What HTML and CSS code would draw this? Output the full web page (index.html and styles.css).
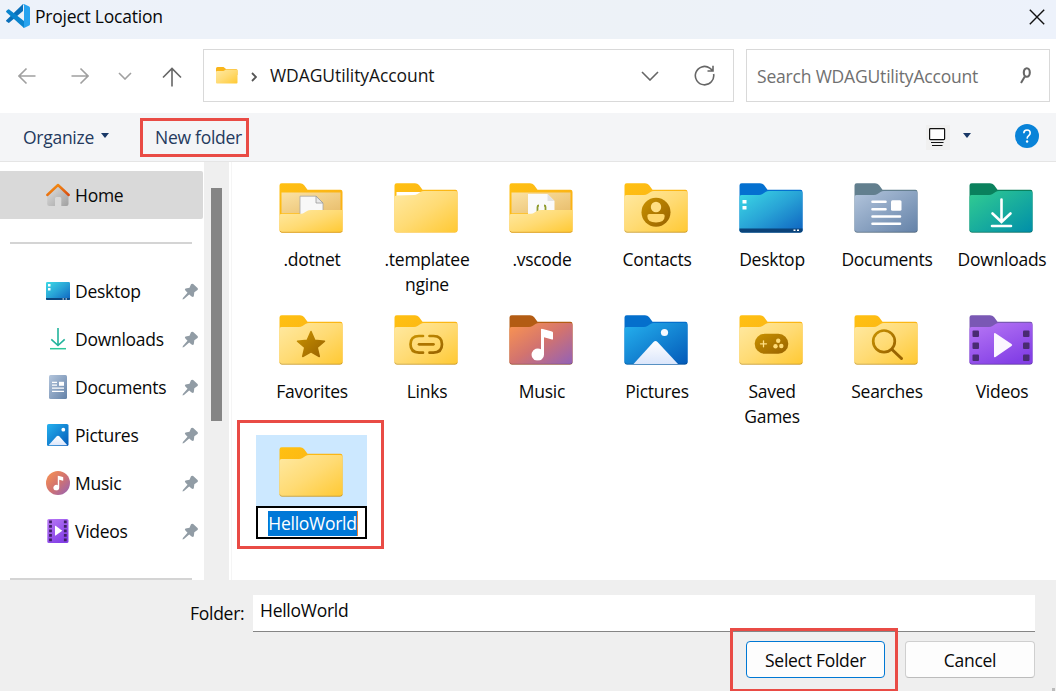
FILE: index.html
```html
<!DOCTYPE html>
<html lang="en">
<head>
<meta charset="utf-8">
<title>Project Location</title>
<link rel="stylesheet" href="styles.css">
</head>
<body>
<svg class="defs" width="0" height="0" aria-hidden="true">
  <defs>
    <linearGradient id="yellow" x1="0" y1="0" x2="1" y2="1"><stop offset="0" stop-color="#ffe9a2"/><stop offset=".5" stop-color="#ffdb74"/><stop offset="1" stop-color="#ffc933"/></linearGradient>
    <linearGradient id="cyan" x1="0" y1="0" x2="1" y2="1"><stop offset="0" stop-color="#3ddae6"/><stop offset=".5" stop-color="#28a3d6"/><stop offset="1" stop-color="#0e62c0"/></linearGradient>
    <linearGradient id="steel" x1="0" y1="0" x2="1" y2="1"><stop offset="0" stop-color="#b3c5dc"/><stop offset="1" stop-color="#6482a8"/></linearGradient>
    <linearGradient id="green" x1="0" y1="0" x2="1" y2="1"><stop offset="0" stop-color="#32cd91"/><stop offset="1" stop-color="#008ea9"/></linearGradient>
    <linearGradient id="sunset" x1="0" y1="0" x2="1" y2="1"><stop offset="0" stop-color="#fb9550"/><stop offset=".5" stop-color="#d2736f"/><stop offset="1" stop-color="#9261b8"/></linearGradient>
    <linearGradient id="blue" x1="0" y1="0" x2="1" y2="1"><stop offset="0" stop-color="#25b1ee"/><stop offset="1" stop-color="#0359b8"/></linearGradient>
    <linearGradient id="purple" x1="0" y1="0" x2=".6" y2="1"><stop offset="0" stop-color="#b878f5"/><stop offset="1" stop-color="#8440e6"/></linearGradient>
    <linearGradient id="gold" x1="0" y1="0" x2="1" y2="1"><stop offset="0" stop-color="#c99200"/><stop offset="1" stop-color="#986200"/></linearGradient>
    <linearGradient id="snow" x1="0" y1="0" x2="0" y2="1"><stop offset="0" stop-color="#fff"/><stop offset="1" stop-color="#dbe6fb"/></linearGradient>
    <linearGradient id="amber" x1="0" y1="0" x2="1" y2="1"><stop offset="0" stop-color="#ffc012"/><stop offset="1" stop-color="#f8ac18"/></linearGradient>
    <linearGradient id="roof" x1="0" y1="0" x2="1" y2="1"><stop offset="0" stop-color="#f99a14"/><stop offset="1" stop-color="#d94c10"/></linearGradient>
    <linearGradient id="wall" x1="0" y1="0" x2="1" y2="1"><stop offset="0" stop-color="#e2e2e2"/><stop offset="1" stop-color="#a0a0a0"/></linearGradient>
    <linearGradient id="glass" x1="0" y1="0" x2="1" y2="1"><stop offset="0" stop-color="#fbe2a4"/><stop offset="1" stop-color="#e8bd6b"/></linearGradient>
    <symbol id="back" viewBox="0 0 64 50"><path d="M.5 2.500Q.5.300 2.700.300H21Q23.500.300 25 2L28.500 6.800H61.500Q63.500 6.800 63.500 9V47Q63.500 49.500 61 49.500H3Q.5 49.500.5 47Z"/></symbol>
    <symbol id="front" viewBox="0 0 64 50"><path d="M.5 14Q.5 12 2.500 12H20Q22 12 23.500 11L26.500 9Q28 8 30 8H61.500Q63.500 8 63.500 10V47Q63.500 49.200 61 49.200H3Q.5 49.200.5 47Z"/><path d="M1 47.500Q1.500 49.200 3 49.200H61Q63 49.200 63.200 47.500" fill="none" stroke="#000" stroke-opacity=".2" stroke-width=".9"/></symbol>
    <symbol id="folder" viewBox="0 0 64 50"><use href="#back" fill="url(#amber)"/><use href="#front" fill="url(#yellow)"/></symbol>
    <symbol id="open" viewBox="0 0 64 50"><path fill="url(#yellow)" d="M.5 33Q.5 30.700 3 30.700H22Q24 30.700 25.500 29.500L28 28Q29.500 27 32 27H63.500V47Q63.500 49.200 61 49.200H3Q.5 49.200.5 47Z"/><path d="M1 48Q2 49.300 3 49.300H61Q63 49.300 63.300 48" fill="none" stroke="#dba22b" stroke-width=".9"/></symbol>
    <symbol id="pin" viewBox="0 0 17 17"><path fill="#919ca5" d="M9 1.200Q10 .2 11.200 1L15.500 5Q16.500 6 15.500 7L12.300 9.300L11.800 13.200Q11 14.600 9.600 13.500L7.200 11.400L2 16L.5 16.400L.9 14.900L5.500 9.700L3.200 7.300Q2.300 6.100 3.600 5.400L7.500 4.700Z"/></symbol>
    <symbol id="note" viewBox="0 0 22 32"><path fill="#fff" d="M10 .5Q10 0 11 .3L21 3Q22 3.300 22 4.200V10.500Q22 11.300 21 11L13 8.800V26A6.200 6.200 0 1 1 10 20.800Z"/></symbol>
  </defs>
</svg>

<div class="dialog">
  <header class="titlebar">
    <svg class="logo" width="24" height="24" viewBox="0 0 24 24"><path fill="#0a6fb9" d="M0 16.500L17 0V7L3.200 18.700Q2.600 19.100 2 18.600L.2 17.200Z"/><path fill="#0a84ce" d="M.2 7L2 5.400Q2.600 5 3.200 5.400L18 17V24L.1 8Z"/><path fill="#27a3ef" d="M17 .2Q17.800-.1 18.500.2L23.200 2.500Q24 3 24 4V20Q24 21 23.200 21.500L18.500 23.800Q17.800 24.200 17 23.600Q18 23 18 22V2Q18 .8 17 .2Z"/></svg>
    <span class="caption">Project Location</span>
    <svg class="close" width="16" height="16" viewBox="0 0 16 16"><path d="M.8.8L15.200 15.200M15.200.8L.8 15.200" stroke="#111" stroke-width="1.400"/></svg>
  </header>

  <nav class="navbar">
    <div class="history">
      <svg width="18" height="18" viewBox="0 0 18 18" class="line pale"><path d="M17.500 9H1M8.500 1.500L1 9L8.500 16.500"/></svg>
      <svg width="18" height="18" viewBox="0 0 18 18" class="line pale"><path d="M.5 9H17M9.500 1.500L17 9L9.500 16.500"/></svg>
      <svg width="14" height="8" viewBox="0 0 14 8" class="line pale"><path d="M1 1L7 7L13 1"/></svg>
      <svg width="20" height="20" viewBox="0 0 20 20" class="line dark"><path d="M10 19.500V1.500M1 10.500L10 1.500L19 10.500"/></svg>
    </div>
    <div class="address">
      <svg width="22" height="17" viewBox="0 0 22 17"><path fill="#f9b51b" d="M0 1.500Q0 0 1.500 0H7.500L10 2H20Q21.500 2 21.500 3.500V8H0Z"/><path fill="url(#yellow)" d="M0 5Q0 4 1 4H7.500L10 2.500H20.500Q21.500 2.500 21.500 3.500V15.500Q21.500 16.500 20.500 16.500H1Q0 16.500 0 15.500Z"/></svg>
      <svg class="line crumb" width="6" height="10" viewBox="0 0 6 10"><path d="M1 1L5 5L1 9"/></svg>
      <span class="path">WDAGUtilityAccount</span>
      <svg class="line dark" width="18" height="10" viewBox="0 0 18 10"><path d="M1 1L9 9L17 1"/></svg>
      <svg class="line dark reload" width="21" height="21" viewBox="0 0 21 21"><path d="M19.600 9A9.200 9.200 0 1 1 15.800 3.100L18.800 5.600M19 .8V6H13.500"/></svg>
    </div>
    <div class="search">
      <span>Search WDAGUtilityAccount</span>
      <svg width="11" height="17" viewBox="0 0 11 17"><ellipse cx="6.800" cy="5.500" rx="3" ry="4.300" fill="none" stroke="#666" stroke-width="2.100"/><path d="M4.800 9.500L1 16" stroke="#666" stroke-width="2"/></svg>
    </div>
  </nav>

  <div class="toolbar">
    <span class="organize">Organize</span>
    <i class="caret"></i>
    <span class="new-folder">New folder<i class="mark"></i></span>
    <span class="view"><svg width="18" height="19" viewBox="0 0 18 19"><rect x=".6" y=".6" width="15" height="11" rx=".8" fill="#fff" stroke="#111" stroke-width="1.200"/><path d="M2 14.500H14.500M3 17.500H13.500" stroke="#111" stroke-width="1"/></svg></span>
    <i class="caret view-caret"></i>
    <span class="help"><svg width="24" height="24" viewBox="0 0 24 24"><circle cx="12" cy="12" r="12" fill="#0983d8"/><path d="M8.800 9.300Q8.800 6 12 6T15.200 9Q15.200 10.500 13.700 11.700T12.100 14.600" fill="none" stroke="#fff" stroke-width="1.600"/><circle cx="12.100" cy="17.500" r="1.200" fill="#fff"/></svg></span>
  </div>

  <main class="content">
    <aside class="sidebar">
      <div class="place home"><svg width="24" height="24" viewBox="0 0 24 24"><path fill="url(#wall)" d="M1.200 11.500L12 2L22.500 11.500V21Q22.500 23 20.500 23H15.300V15.500Q15.300 14 14 14H10.500Q9 14 9 15.500V23H3.200Q1.200 23 1.200 21Z"/><path d="M1.300 12L12 2L22.700 12" fill="none" stroke="url(#roof)" stroke-width="2.400" stroke-linecap="round" stroke-linejoin="round"/></svg><span>Home</span></div>
      <hr class="rule">
      <div class="pinned">
        <div class="place"><svg width="24" height="24" viewBox="0 0 24 24"><rect y="3" width="24" height="18" rx="1.200" fill="url(#cyan)"/><path fill="#0c477f" d="M0 19H24V20Q24 21 23 21H1Q0 21 0 20Z"/><path fill="#fff" d="M2 5H4.500V7.500H2ZM2 9H4.500V11.500H2ZM16.500 19.500H18V20.500H16.500ZM19.500 19.500H21V20.500H19.500Z"/></svg><span>Desktop</span><svg class="pin" width="17" height="17"><use href="#pin"/></svg></div>
        <div class="place"><svg width="24" height="24" viewBox="0 0 24 24"><path d="M12 1V18M5.300 12.300L12 18.500L18.700 12.300" fill="none" stroke="#22b39b" stroke-width="1.600"/><path d="M4 21.700H20" stroke="#2cc89a" stroke-width="1.500"/></svg><span>Downloads</span><svg class="pin" width="17" height="17"><use href="#pin"/></svg></div>
        <div class="place"><svg width="24" height="24" viewBox="0 0 24 24"><rect x="3" width="18" height="24" rx="1.500" fill="url(#steel)"/><path d="M6 7.300H11M6 10.200H11M6 13.200H18M6 16.400H18" stroke="#fff" stroke-width="1.200"/><rect x="13" y="6.800" width="5" height="4" fill="#fff"/></svg><span>Documents</span><svg class="pin" width="17" height="17"><use href="#pin"/></svg></div>
        <div class="place"><svg width="24" height="24" viewBox="0 0 24 24"><rect x="1" y="1" width="21.500" height="22" rx="1.600" fill="url(#blue)"/><path fill="url(#snow)" d="M2.500 22.300L10.500 13.500Q12 12 13.500 13.500L21.300 22.300Z"/><circle cx="17.300" cy="6.700" r="1.900" fill="#fff"/></svg><span>Pictures</span><svg class="pin" width="17" height="17"><use href="#pin"/></svg></div>
        <div class="place"><svg width="24" height="24" viewBox="0 0 24 24"><circle cx="12" cy="12" r="12" fill="url(#sunset)"/><use href="#note" x="7" y="4.500" width="10.500" height="15"/></svg><span>Music</span><svg class="pin" width="17" height="17"><use href="#pin"/></svg></div>
        <div class="place"><svg width="24" height="24" viewBox="0 0 24 24"><rect x="1.300" width="21.200" height="24" rx="1.600" fill="url(#purple)"/><path d="M4.500 1.500V24M19.300 1.500V24" stroke="#402064" stroke-width="2.800" stroke-dasharray="2.800 1.700"/><path fill="#fff" d="M9 7Q9 6.500 9.600 6.800L16.300 11.700L9.600 16.500Q9 16.900 9 16.200Z"/></svg><span>Videos</span><svg class="pin" width="17" height="17"><use href="#pin"/></svg></div>
      </div>
      <hr class="rule">
    </aside>
    <div class="track"><div class="thumb"></div></div>

    <section class="files">
      <div class="file"><svg width="64" height="50" viewBox="0 0 64 50"><use href="#back" fill="url(#amber)"/><path fill="url(#glass)" d="M2.500 9.500H61.500V30H2.500Z"/><path fill="#f8f8f8" stroke="#a6a6a6" stroke-width=".8" d="M21 32V13.200H37L44 20V31Z"/><path fill="#e9e9e9" stroke="#999" stroke-width=".8" d="M37 13.200V20H44Z"/><use href="#open"/></svg><span>.dotnet</span></div>
      <div class="file"><svg width="64" height="50" viewBox="0 0 64 50"><use href="#back" fill="url(#amber)"/><path fill="#fff" d="M2.500 9H30V13H2.500Z"/><path fill="url(#yellow)" d="M.5 14Q.5 12.800 2.500 12.600L20 12Q22 12 23.500 11L26.500 9Q28 8 30 8H61.500Q63.500 8 63.500 10V47Q63.500 49.200 61 49.200H3Q.5 49.200.5 47Z"/></svg><span>.templatee<br>ngine</span></div>
      <div class="file"><svg width="64" height="50" viewBox="0 0 64 50"><use href="#back" fill="url(#amber)"/><path fill="url(#glass)" d="M2.500 9.500H61.500V30H2.500Z"/><path fill="#fafafa" d="M19 32V11H38.500L45.500 18V31Z"/><path fill="#e3e3e3" d="M38.500 11V18H45.500Z"/><path d="M30 22.500Q28.500 22.500 28.500 24V29M35 22.500Q36.500 22.500 36.500 24V29" fill="none" stroke="#8f9b2d" stroke-width="1.800"/><use href="#open"/></svg><span>.vscode</span></div>
      <div class="file"><svg width="64" height="50" viewBox="0 0 64 50"><use href="#folder"/><circle cx="32" cy="29.200" r="14.500" fill="url(#gold)"/><circle cx="32" cy="24" r="5.200" fill="#ffde82"/><path fill="#ffd76d" d="M23.300 33Q23.300 31 25.300 31H38.700Q40.700 31 40.700 33Q40.700 39.500 32 39.500T23.300 33Z"/></svg><span>Contacts</span></div>
      <div class="file"><svg width="64" height="50" viewBox="0 0 64 50"><use href="#back" fill="#0470d0"/><use href="#front" fill="url(#cyan)"/><path fill="#0b4379" d="M.5 45.500H63.500V47Q63.500 49.500 61 49.500H3Q.5 49.500.5 47Z"/><path fill="#fff" d="M3.500 17H7.500V20.500H3.500ZM3.500 23H7.500V26.500H3.500ZM54.500 46.500H56.500V48H54.500ZM58 46.500H60V48H58Z"/></svg><span>Desktop</span></div>
      <div class="file"><svg width="64" height="50" viewBox="0 0 64 50"><use href="#back" fill="#627f8e"/><use href="#front" fill="url(#steel)"/><path d="M18.500 18.700H31.500M18.500 26.200H31.500M18.500 33.500H46M18.500 40.800H46" stroke="#fff" stroke-width="2.600" stroke-linecap="round"/><rect x="37" y="17.300" width="10.500" height="10.500" rx="1.500" fill="#fff"/></svg><span>Documents</span></div>
      <div class="file"><svg width="64" height="50" viewBox="0 0 64 50"><use href="#back" fill="#0a815d"/><use href="#front" fill="url(#green)"/><path d="M32.500 16.500V38.500M23.500 30.500L32.500 39L41.500 30.500M23 43H42" fill="none" stroke="#fff" stroke-width="2.600" stroke-linecap="round"/></svg><span>Downloads</span></div>

      <div class="file"><svg width="64" height="50" viewBox="0 0 64 50"><use href="#folder"/><path fill="url(#gold)" stroke="url(#gold)" stroke-width="1.500" stroke-linejoin="round" d="M32 16.500L35.800 25.300L45.500 26.200L38.200 32.500L40.300 41.500L32 36.800L23.700 41.500L25.800 32.500L18.500 26.200L28.200 25.300Z"/></svg><span>Favorites</span></div>
      <div class="file"><svg width="64" height="50" viewBox="0 0 64 50"><use href="#folder"/><path d="M29 21H25Q16.500 21 16.500 29.300T25 37.700H29M35.500 21H39.500Q48 21 48 29.300T39.500 37.700H35.500" fill="none" stroke="url(#gold)" stroke-width="2.700" stroke-linecap="round"/><path d="M25 29.300H39.500" stroke="#ad7500" stroke-width="2.700" stroke-linecap="round"/></svg><span>Links</span></div>
      <div class="file"><svg width="64" height="50" viewBox="0 0 64 50"><use href="#back" fill="#b35c13"/><use href="#front" fill="url(#sunset)"/><use href="#note" x="22" y="13.500" width="22" height="32"/></svg><span>Music</span></div>
      <div class="file"><svg width="64" height="50" viewBox="0 0 64 50"><use href="#back" fill="#046fcc"/><use href="#front" fill="url(#blue)"/><path fill="url(#snow)" d="M9.500 49L29.500 27Q31.500 25 33.500 27L54 49Z"/><circle cx="40.500" cy="17.500" r="3.600" fill="#f7faff"/></svg><span>Pictures</span></div>
      <div class="file"><svg width="64" height="50" viewBox="0 0 64 50"><use href="#folder"/><rect x="15.700" y="18.800" width="33.600" height="20" rx="10" fill="url(#gold)"/><path d="M21.500 28.800H27.500M24.500 25.800V31.800" stroke="#ffdf83" stroke-width="1.300" stroke-linecap="round"/><g fill="#ffdb75"><circle cx="36.500" cy="31.200" r="2.200"/><circle cx="39.200" cy="25.800" r="2.200"/><circle cx="42.300" cy="31" r="2.200"/></g></svg><span>Saved<br>Games</span></div>
      <div class="file"><svg width="64" height="50" viewBox="0 0 64 50"><use href="#folder"/><circle cx="30" cy="26.300" r="10.800" fill="none" stroke="url(#gold)" stroke-width="2.700"/><path d="M38 34.500L47.500 43.500" stroke="#996300" stroke-width="3" stroke-linecap="round"/></svg><span>Searches</span></div>
      <div class="file"><svg width="64" height="50" viewBox="0 0 64 50"><use href="#back" fill="#7a58b4"/><use href="#front" fill="url(#purple)"/><g fill="#492b72"><rect x="3.500" y="15.500" width="6.500" height="6.500" rx="1"/><rect x="3.500" y="27.500" width="6.500" height="6.500" rx="1"/><rect x="3.500" y="39.500" width="6.500" height="6.500" rx="1"/><rect x="54" y="15.500" width="6.500" height="6.500" rx="1"/><rect x="54" y="27.500" width="6.500" height="6.500" rx="1"/><rect x="54" y="39.500" width="6.500" height="6.500" rx="1"/></g><path fill="#fbf6ff" d="M25 19Q25 17.500 26.500 18.300L42.500 29Q44 30 42.500 31L26.500 42Q25 42.800 25 41.500Z"/></svg><span>Videos</span></div>

      <div class="file selected"><svg width="64" height="50"><use href="#folder"/></svg><div class="rename"><span>HelloWorld</span></div><i class="mark"></i></div>
    </section>
  </main>

  <footer class="footer">
    <div class="field"><label>Folder:</label><div class="input">HelloWorld</div></div>
    <div class="actions">
      <div class="button primary"><span>Select Folder</span><i class="mark"></i></div>
      <div class="button"><span>Cancel</span></div>
    </div>
    <i class="grip"></i>
  </footer>
</div>
</body>
</html>
```

FILE: styles.css
```css
* { box-sizing: border-box; }

body {
  margin: 0;
  overflow: hidden;
  background: #fff;
  color: #080808;
  font-family: "Open Sans", "Noto Sans", sans-serif;
  font-size: 17.5px;
  letter-spacing: -0.27px;
  line-height: 25px;
}

svg { display: block; flex: none; }
.defs { position: absolute; }
.dialog { width: 1056px; height: 691px; display: flex; flex-direction: column; }

.titlebar {
  height: 39px;
  display: flex;
  align-items: center;
  padding: 0 11px 7px 6px;
  background: linear-gradient(90deg, #edf2fa, #edf2f7 60%, #edf2fb);
}
.caption { margin: 1px 0 0 5px; letter-spacing: -0.22px; }
.close { margin: 1px 0 0 auto; }

.navbar {
  height: 74px;
  display: flex;
  align-items: center;
  padding: 0 6px 1px 18px;
}
.history { width: 185px; display: flex; align-items: center; }
.history svg:nth-child(2) { margin-left: 35px; }
.history svg:nth-child(3) { margin-left: 29px; }
.history svg:nth-child(4) { margin: 2px 0 0 30px; }
.line { fill: none; stroke-width: 1.6; }
.pale { stroke: #a0a0a0; }
.dark { stroke: #666; }
.address, .search {
  height: 53px;
  display: flex;
  align-items: center;
  border: 1px solid #d9d9d9;
}
.address { width: 531px; padding: 0 18px 0 12px; }
.crumb { margin: 2px 13px 0 13px; stroke: #555; stroke-width: 1.8; }
.path { margin-right: auto; color: #151515; letter-spacing: -0.08px; }
.reload { margin-left: 35px; }
.search {
  width: 304px;
  margin-left: 12px;
  padding: 0 18px 0 10px;
  justify-content: space-between;
  color: #707070;
  letter-spacing: -0.19px;
}
.search span { margin-top: 2px; }

.toolbar {
  height: 49px;
  display: flex;
  align-items: center;
  padding: 0 17px 0 23px;
  background: #f4f5f7;
  border-bottom: 1px solid #e5e5e5;
  color: #243a5e;
}
.caret {
  margin: -4px 0 0 7px;
  border: 4px solid transparent;
  border-top: 5px solid #193867;
  border-bottom: 0;
}
.new-folder { position: relative; width: 87px; margin-left: 46px; white-space: nowrap; }
.view { margin-left: auto; padding: 3px 3px; background: #f0f0f0; }
.view-caret { margin-left: 13px; }
.help { margin: -3px 0 0 44px; }

.mark { position: absolute; border: 3px solid #e94b45; }
.new-folder .mark { left: -15px; top: -7px; width: 109px; height: 39px; }

.content { height: 418px; display: flex; }
.sidebar { width: 204px; padding-top: 9px; overflow: hidden; }
.place {
  width: 203px;
  height: 48px;
  display: flex;
  align-items: center;
  padding: 0 4px 0 46px;
}
.place span { margin-left: 5px; }
.home { background: #d9d9d9; border-radius: 0 2px 2px 0; }
.pin { margin-left: auto; }
.rule { width: 182px; height: 2px; margin: 23px 0 23px 10px; border: 0; background: #d4d4d4; }
.track { width: 25px; padding: 26px 0 0 7px; background: #efefef; }
.thumb { width: 11px; height: 233px; background: #858585; }

.files {
  width: 825px;
  margin-left: 2px;
  padding: 9px 0 0 21px;
  border-left: 1px solid #f5f5f5;
  display: grid;
  grid-template-columns: repeat(7, 115px);
  grid-auto-rows: 132px;
}
.file {
  display: flex;
  flex-direction: column;
  align-items: center;
  padding-top: 12px;
  text-align: center;
}
.file > span { margin-top: 14px; padding-left: 3px; }
.selected {
  position: relative;
  width: 111px;
  height: 72px;
  margin-left: 3px;
  background: #cce8ff;
}
.selected > svg { margin-right: 2px; }
.rename {
  flex: none;
  width: 111px;
  height: 33px;
  margin-top: 9px;
  padding: 3px 0 0 3px;
  border: 2px solid #000;
  background: #fff;
}
.rename span {
  display: inline-block;
  height: 25px;
  line-height: 25px;
  background: #0078d7;
  color: #fff;
  border-right: 1px solid #f08030;
}
.selected .mark { left: -19px; top: -15px; width: 147px; height: 129px; }

.footer { position: relative; height: 111px; padding: 15px 21px 0 190px; background: #efefef; }
.field { display: flex; }
.field label { width: 62px; padding-top: 6px; }
.input {
  flex: 1;
  height: 37px;
  padding: 3px 0 0 7px;
  margin-left: 1px;
  background: #fff;
  border-bottom: 1px solid #858585;
}
.actions { display: flex; justify-content: flex-end; gap: 20px; margin-top: 9px; }
.button {
  width: 130px;
  height: 37px;
  border: 1px solid #cfcfcf;
  border-bottom-color: #bcbcbc;
  border-radius: 4px;
  background: #fdfdfd;
  text-align: center;
  line-height: 37px;
}
.primary { position: relative; width: 139px; border-color: #0078d4; }
.primary .mark { left: -17px; top: -14px; width: 168px; height: 64px; }
.grip { position: absolute; right: 1px; bottom: 0; width: 3px; height: 3px; background: #bbb; }
```
